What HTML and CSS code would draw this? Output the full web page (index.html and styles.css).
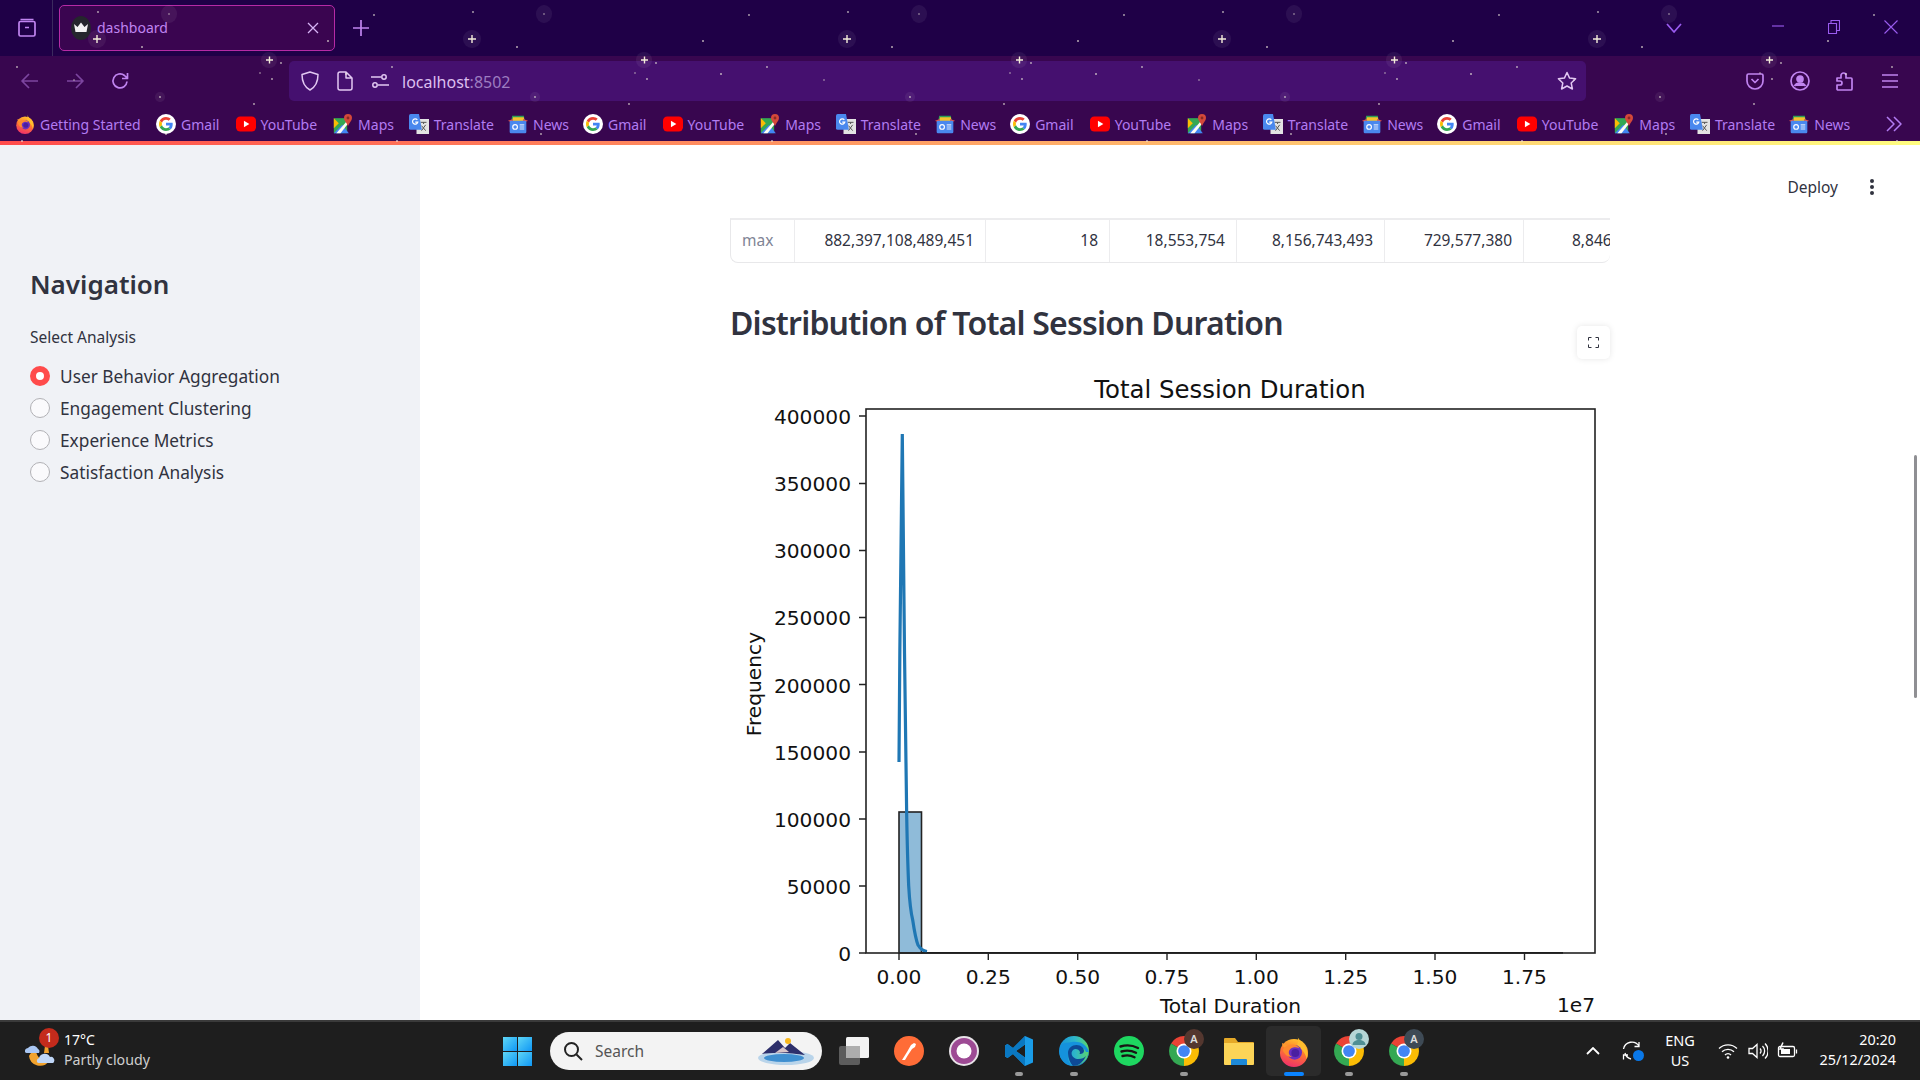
FILE: index.html
```html
<!DOCTYPE html>
<html lang="en">
<head>
    <meta charset="UTF-8">
    <meta name="viewport" content="width=device-width, initial-scale=1.0">
    <title>dashboard</title>
    <link rel="stylesheet" href="styles.css">
</head>
<body>
    <!-- shared icons -->
    <svg class="defs" width="0" height="0" aria-hidden="true">
        <defs>
            <linearGradient id="winGrad" x1="0" y1="0" x2="1" y2="1"><stop offset="0" stop-color="#5fd6f5"/><stop offset="1" stop-color="#0f97f5"/></linearGradient>
            <linearGradient id="edgeGrad" x1="0" y1="0" x2="1" y2="0"><stop offset="0" stop-color="#1592dc"/><stop offset=".55" stop-color="#2fb8c8"/><stop offset="1" stop-color="#5bd66a"/></linearGradient>
            <linearGradient id="foxGrad" x1=".7" y1="0" x2=".4" y2="1"><stop offset="0" stop-color="#ffc42e"/><stop offset=".45" stop-color="#ff7a2e"/><stop offset="1" stop-color="#f0306a"/></linearGradient>
            <symbol id="i-firefox" viewBox="0 0 24 24">
                <circle cx="12" cy="13.500" r="10.500" fill="url(#foxGrad)"/>
                <path d="M14.500 .5c.5 3 3.500 4 6 7.500 2.500 4 2 8 1 10-1-5-4-8-8-9.500 2-2.500 2-5.500 1-8z" fill="#ffbd2e"/>
                <path d="M3 6c0 2 1 3 2 3.500L8 8z" fill="#ff9a2e"/>
                <circle cx="12.500" cy="13" r="5.500" fill="#6a2fc0"/>
                <circle cx="13" cy="13.500" r="3" fill="#4a1fa0"/>
                <path d="M3.500 11c2-3 6-4.500 9.500-3.500 1.500.5 2.500 1.500 3 2.500-3-1.500-6-1-7.500 1.500-1 2 0 4 2 5-3 0-6-2-7-5.500z" fill="#ff8a2e"/>
            </symbol>
            <symbol id="i-google" viewBox="0 0 24 24">
                <circle cx="12" cy="12" r="12" fill="#fff"/>
                <g transform="translate(3.600 3.600) scale(.35)">
                    <path fill="#EA4335" d="M24 9.500c3.540 0 6.710 1.220 9.210 3.600l6.850-6.850C35.900 2.380 30.470 0 24 0 14.620 0 6.510 5.380 2.560 13.220l7.980 6.190C12.430 13.720 17.740 9.500 24 9.500z"/>
                    <path fill="#4285F4" d="M46.980 24.550c0-1.570-.15-3.090-.38-4.550H24v9.020h12.940c-.58 2.960-2.260 5.480-4.780 7.180l7.730 6c4.510-4.180 7.090-10.360 7.090-17.650z"/>
                    <path fill="#FBBC05" d="M10.530 28.590c-.48-1.450-.76-2.990-.76-4.590s.27-3.140.76-4.590l-7.980-6.190C.92 16.460 0 20.120 0 24c0 3.880.92 7.540 2.560 10.780l7.970-6.190z"/>
                    <path fill="#34A853" d="M24 48c6.480 0 11.930-2.130 15.890-5.810l-7.730-6c-2.150 1.450-4.920 2.300-8.160 2.300-6.260 0-11.570-4.220-13.470-9.910l-7.980 6.190C6.510 42.620 14.620 48 24 48z"/>
                </g>
            </symbol>
            <symbol id="i-youtube" viewBox="0 0 24 24">
                <rect x="0" y="3" width="24" height="18" rx="5" fill="#f00"/>
                <path d="M9.500 8l6.500 4-6.500 4z" fill="#fff"/>
            </symbol>
            <symbol id="i-maps" viewBox="0 0 24 24">
                <path d="M1 5h16v18H1z" fill="#34a853"/>
                <path d="M1 23l10-10 8 10z" fill="#4285f4"/>
                <path d="M1 5l6 6-6 6z" fill="#fbbc05"/>
                <path d="M4 23L17 8v5l-8 10z" fill="#fdfdf5"/>
                <path d="M18 0a4.800 4.800 0 0 1 4.800 4.800c0 3.200-3.300 5.700-4.800 9.700-1.500-4-4.800-6.500-4.800-9.700A4.800 4.800 0 0 1 18 0z" fill="#d4493a"/>
                <circle cx="18" cy="4.800" r="1.700" fill="#8c2a22"/>
            </symbol>
            <symbol id="i-translate" viewBox="0 0 24 24">
                <path d="M9 6h15v18H9z" fill="#e3e3e3"/>
                <path d="M14 10h7M17.500 10v2M15 20l5-7M15 14l5 6" stroke="#555" stroke-width="1.200" fill="none"/>
                <path d="M0 2a2 2 0 0 1 2-2h10l3.500 19H2a2 2 0 0 1-2-2z" fill="#4a88ee"/>
                <path d="M10 7a3.200 3.200 0 1 0 .6 2.700H7.500" stroke="#fff" stroke-width="1.400" fill="none"/>
            </symbol>
            <symbol id="i-news" viewBox="0 0 24 24">
                <path d="M5 2h14l1 6H4z" fill="#2f9e57"/>
                <path d="M6 4h13l1 6H5z" fill="#f6c02d"/>
                <path d="M0 8l6-2v5z" fill="#e2574a"/>
                <path d="M24 8l-6-2v5z" fill="#e2574a"/>
                <rect x="2" y="8" width="20" height="15" rx="1.500" fill="#4a88ee"/>
                <circle cx="8.500" cy="15.500" r="2.800" fill="none" stroke="#fff" stroke-width="1.400"/>
                <path d="M14 13h5.500M14 15.500h5.500M14 18h5.500" stroke="#dce8fb" stroke-width="1.300"/>
            </symbol>
            <symbol id="i-chrome" viewBox="0 0 24 24">
                <path d="M12 12L22.390 6A12 12 0 0 0 1.610 6z" fill="#ea4335"/>
                <path d="M12 12L1.610 6A12 12 0 0 0 12 24z" fill="#34a853"/>
                <path d="M12 12L12 24A12 12 0 0 0 22.390 6z" fill="#fbbc05"/>
                <circle cx="12" cy="12" r="6" fill="#fff"/>
                <circle cx="12" cy="12" r="4.700" fill="#4285f4"/>
            </symbol>
        </defs>
    </svg>

    <div class="browser">
        <div class="tabstrip">
            <div class="tab-manager">
                <svg class="ic" viewBox="0 0 20 20" width="20" height="20"><path d="M3.500 1.500h13M2 5a1.500 1.500 0 0 1 1.500-1.500h13A1.500 1.500 0 0 1 18 5v11.500a1.500 1.500 0 0 1-1.500 1.500h-13A1.500 1.500 0 0 1 2 16.500zM8 9.500h4"/></svg>
            </div>
            <div class="tab">
                <svg class="favicon" viewBox="0 0 20 24" width="20" height="24"><ellipse cx="10" cy="12" rx="10" ry="12" fill="#25262d"/><path d="M3 8l3.500 3L10 6.500 13.500 11 17 8l-1.500 8h-11z" fill="#f3f3f3"/></svg>
                <span class="tab-title">dashboard</span>
                <svg class="ic tab-close" viewBox="0 0 12 12" width="12" height="12"><path d="M1 1l10 10M11 1L1 11"/></svg>
            </div>
            <div class="tab-new">
                <svg class="ic" viewBox="0 0 16 16" width="16" height="16"><path d="M8 0v16M0 8h16"/></svg>
            </div>
            <div class="win-controls">
                <svg class="ic ic-win win-list" viewBox="0 0 16 10" width="16" height="10"><path d="M1 1l7 8 7-8"/></svg>
                <svg class="ic ic-win win-min" viewBox="0 0 12 2" width="12" height="2"><path d="M0 1h12"/></svg>
                <svg class="ic ic-win win-max" viewBox="0 0 12 14" width="12" height="14"><path d="M.5 3.500h8v10h-8zM3 3.500v-3h8.500v10h-3"/></svg>
                <svg class="ic ic-win win-close" viewBox="0 0 14 14" width="14" height="14"><path d="M.5.500l13 13M13.500.500l-13 13"/></svg>
            </div>
        </div>

        <div class="toolbar">
            <div class="tool dim"><svg class="ic" viewBox="0 0 18 16" width="18" height="16"><path d="M17 8H1M8 1L1 8l7 7"/></svg></div>
            <div class="tool dim"><svg class="ic" viewBox="0 0 18 16" width="18" height="16"><path d="M1 8h16M10 1l7 7-7 7"/></svg></div>
            <div class="tool"><svg class="ic" viewBox="0 0 18 18" width="18" height="18"><path d="M16 9.500A7 7 0 1 1 13.500 3.500L16 6M16.500 1v5.500H11"/></svg></div>
            <div class="urlbar">
                <div class="url-icon"><svg class="ic ic-pale" viewBox="0 0 18 20" width="18" height="20"><path d="M9 1l8 2.500c0 8-2.500 12.500-8 15.500C3.500 16 1 11.500 1 3.500z"/></svg></div>
                <div class="url-icon"><svg class="ic ic-pale" viewBox="0 0 16 20" width="16" height="20"><path d="M1 3a2 2 0 0 1 2-2h6l6 6v10a2 2 0 0 1-2 2H3a2 2 0 0 1-2-2zM9 1v6h6"/></svg></div>
                <div class="url-icon"><svg class="ic ic-pale" viewBox="0 0 18 14" width="18" height="14"><circle cx="13" cy="3" r="2.200"/><circle cx="4" cy="11" r="2.200"/><path d="M0 3h10M7 11h11"/></svg></div>
                <div class="url-text">localhost<span class="url-port">:8502</span></div>
                <div class="url-star"><svg class="ic ic-pale" viewBox="0 0 20 20" width="20" height="20"><path d="M10 1.500l2.600 5.600 6 .7-4.400 4.200 1.200 6L10 15l-5.400 3 1.200-6L1.400 7.800l6-.7z"/></svg></div>
            </div>
            <div class="tool-right">
                <div class="tool"><svg class="ic" viewBox="0 0 18 18" width="18" height="18"><path d="M1 3.500A1.500 1.500 0 0 1 2.500 2h13A1.500 1.500 0 0 1 17 3.500V9A8 8 0 0 1 1 9zM5.500 7L9 10.500 12.500 7"/></svg></div>
                <div class="tool"><svg class="ic" viewBox="0 0 20 20" width="20" height="20"><circle cx="10" cy="10" r="9"/><circle cx="10" cy="8" r="3" fill="currentColor"/><path d="M4.500 15c1-2 3-3 5.500-3s4.500 1 5.500 3" fill="currentColor"/></svg></div>
                <div class="tool"><svg class="ic" viewBox="0 0 18 20" width="18" height="20"><path d="M1 7h4V4.500a2.500 2.500 0 0 1 5 0V7h5a1 1 0 0 1 1 1v10a1 1 0 0 1-1 1H2a1 1 0 0 1-1-1v-4h3a2 2 0 0 0 0-4H1z"/></svg></div>
                <div class="tool"><svg class="ic" viewBox="0 0 16 14" width="16" height="14"><path d="M0 1h16M0 7h16M0 13h16"/></svg></div>
            </div>
        </div>

        <div class="bookmarks">
            <a class="bm bm-start"><svg class="bm-ic" width="20" height="20"><use href="#i-firefox"/></svg>Getting Started</a>
            <a class="bm bm-gmail"><svg class="bm-ic" width="20" height="20"><use href="#i-google"/></svg>Gmail</a>
            <a class="bm bm-yt"><svg class="bm-ic" width="20" height="20"><use href="#i-youtube"/></svg>YouTube</a>
            <a class="bm bm-maps"><svg class="bm-ic" width="20" height="20"><use href="#i-maps"/></svg>Maps</a>
            <a class="bm bm-tr"><svg class="bm-ic" width="20" height="20"><use href="#i-translate"/></svg>Translate</a>
            <a class="bm bm-news"><svg class="bm-ic" width="20" height="20"><use href="#i-news"/></svg>News</a>
            <a class="bm bm-gmail"><svg class="bm-ic" width="20" height="20"><use href="#i-google"/></svg>Gmail</a>
            <a class="bm bm-yt"><svg class="bm-ic" width="20" height="20"><use href="#i-youtube"/></svg>YouTube</a>
            <a class="bm bm-maps"><svg class="bm-ic" width="20" height="20"><use href="#i-maps"/></svg>Maps</a>
            <a class="bm bm-tr"><svg class="bm-ic" width="20" height="20"><use href="#i-translate"/></svg>Translate</a>
            <a class="bm bm-news"><svg class="bm-ic" width="20" height="20"><use href="#i-news"/></svg>News</a>
            <a class="bm bm-gmail"><svg class="bm-ic" width="20" height="20"><use href="#i-google"/></svg>Gmail</a>
            <a class="bm bm-yt"><svg class="bm-ic" width="20" height="20"><use href="#i-youtube"/></svg>YouTube</a>
            <a class="bm bm-maps"><svg class="bm-ic" width="20" height="20"><use href="#i-maps"/></svg>Maps</a>
            <a class="bm bm-tr"><svg class="bm-ic" width="20" height="20"><use href="#i-translate"/></svg>Translate</a>
            <a class="bm bm-news"><svg class="bm-ic" width="20" height="20"><use href="#i-news"/></svg>News</a>
            <a class="bm bm-gmail"><svg class="bm-ic" width="20" height="20"><use href="#i-google"/></svg>Gmail</a>
            <a class="bm bm-yt"><svg class="bm-ic" width="20" height="20"><use href="#i-youtube"/></svg>YouTube</a>
            <a class="bm bm-maps"><svg class="bm-ic" width="20" height="20"><use href="#i-maps"/></svg>Maps</a>
            <a class="bm bm-tr"><svg class="bm-ic" width="20" height="20"><use href="#i-translate"/></svg>Translate</a>
            <a class="bm bm-news"><svg class="bm-ic" width="20" height="20"><use href="#i-news"/></svg>News</a>
            <svg class="ic bm-more" viewBox="0 0 16 16" width="16" height="16"><path d="M1 1l7 7-7 7M8 1l7 7-7 7"/></svg>
        </div>

        <!-- firefox theme stars, repeats every 375px -->
        <svg class="stars" width="1920" height="145" aria-hidden="true">
            <defs>
                <pattern id="starTile" width="375" height="145" patternUnits="userSpaceOnUse">
                    <g fill="#fff" fill-opacity=".06">
                        <circle cx="97" cy="39" r="9"/>
                        <ellipse cx="169" cy="14" rx="8" ry="9"/>
                        <circle cx="269" cy="60" r="8"/>
                        <circle cx="160" cy="97" r="5"/>
                    </g>
                    <path d="M93 39h8M97 35v8M266 60h7M269.500 56.500v7" stroke="#f3ecd9" stroke-width="1.400" fill="none"/>
                    <g fill="#e9e2d8" fill-opacity=".75">
                        <circle cx="98" cy="12" r=".9"/>
                        <circle cx="169" cy="14" r=".8"/>
                        <circle cx="374" cy="15" r=".9"/>
                        <circle cx="142" cy="47" r="1"/>
                        <circle cx="328" cy="41" r="1"/>
                        <circle cx="281" cy="63" r=".9"/>
                        <circle cx="17" cy="67" r=".9"/>
                        <circle cx="260" cy="73" r=".8"/>
                        <circle cx="346" cy="74" r="1"/>
                        <circle cx="272" cy="79" r=".9"/>
                        <circle cx="74" cy="80" r=".8"/>
                        <circle cx="160" cy="97" r=".9"/>
                        <circle cx="254" cy="104" r=".9"/>
                        <circle cx="166" cy="134" r=".9"/>
                        <circle cx="22" cy="141" r="1"/>
                    </g>
                </pattern>
            </defs>
            <rect width="1920" height="145" fill="url(#starTile)"/>
        </svg>
    </div>
    <div class="decoration"></div>

    <div class="app">
        <aside class="sidebar">
            <h2 class="nav-title">Navigation</h2>
            <p class="radio-label">Select Analysis</p>
            <div class="radio-row"><span class="radio radio-on"></span>User Behavior Aggregation</div>
            <div class="radio-row"><span class="radio"></span>Engagement Clustering</div>
            <div class="radio-row"><span class="radio"></span>Experience Metrics</div>
            <div class="radio-row"><span class="radio"></span>Satisfaction Analysis</div>
        </aside>
        <main class="main">
            <div class="app-header">
                <span class="deploy">Deploy</span>
                <svg class="kebab" viewBox="0 0 4 16" width="4" height="16"><circle cx="2" cy="2" r="2"/><circle cx="2" cy="8" r="2"/><circle cx="2" cy="14" r="2"/></svg>
            </div>
            <div class="block">
                <div class="df">
                    <div class="df-cell df-index">max</div>
                    <div class="df-cell df-c1">882,397,108,489,451</div>
                    <div class="df-cell df-c2">18</div>
                    <div class="df-cell df-c3">18,553,754</div>
                    <div class="df-cell df-c4">8,156,743,493</div>
                    <div class="df-cell df-c5">729,577,380</div>
                    <div class="df-cell df-c6">8,846,</div>
                </div>
                <h2 class="section-title">Distribution of Total Session Duration</h2>
                <div class="chart-wrap">
                    <div class="fullscreen">
                        <svg viewBox="0 0 11 11" width="11" height="11"><path d="M.5 3.500v-3h3M7.500.500h3v3M10.500 7.500v3h-3M3.500 10.500h-3v-3"/></svg>
                    </div>
                    <svg class="chart" viewBox="730 360 880 660" width="880" height="660">
                        <text class="c-title" x="1230" y="398" text-anchor="middle">Total Session Duration</text>

                        <rect x="899" y="812" width="22.500" height="141" fill="#8fbbd9" stroke="#222" stroke-width="1.600"/>
                        <path d="M921.500 952.800H1563" stroke="#111" stroke-width="1.800" fill="none"/>
                        <path d="M899 762C899.800 650 901 500 902.300 434C903.500 520 904.500 700 906.700 816C907.500 860 908 870 908.700 886C909.800 905 911 913 912.700 920C914.500 932 916 940 918 945C921 950 924 951 927 951.500" stroke="#1f77b4" stroke-width="3.200" fill="none"/>

                        <rect x="866" y="409" width="729" height="544" fill="none" stroke="#222" stroke-width="1.600"/>

                        <g stroke="#222" stroke-width="1.400">
                            <path d="M859 953h7M859 886h7M859 819h7M859 752h7M859 684.500h7M859 617.500h7M859 550.500h7M859 483.500h7M859 416h7"/>
                            <path d="M899 953v7M988.300 953v7M1077.700 953v7M1167 953v7M1256.300 953v7M1345.700 953v7M1435 953v7M1524.500 953v7"/>
                        </g>
                        <g class="c-tick" text-anchor="end">
                            <text x="851" y="961">0</text>
                            <text x="851" y="894">50000</text>
                            <text x="851" y="827">100000</text>
                            <text x="851" y="760">150000</text>
                            <text x="851" y="693">200000</text>
                            <text x="851" y="625">250000</text>
                            <text x="851" y="558">300000</text>
                            <text x="851" y="491">350000</text>
                            <text x="851" y="424">400000</text>
                        </g>
                        <g class="c-tick" text-anchor="middle">
                            <text x="899" y="984">0.00</text>
                            <text x="988.300" y="984">0.25</text>
                            <text x="1077.700" y="984">0.50</text>
                            <text x="1167" y="984">0.75</text>
                            <text x="1256.300" y="984">1.00</text>
                            <text x="1345.700" y="984">1.25</text>
                            <text x="1435" y="984">1.50</text>
                            <text x="1524.500" y="984">1.75</text>
                        </g>
                        <text class="c-tick" x="1230.500" y="1012.500" text-anchor="middle">Total Duration</text>
                        <text class="c-tick" x="1595" y="1011.500" text-anchor="end">1e7</text>
                        <text class="c-tick" x="761" y="684" text-anchor="middle" transform="rotate(-90 761 684)">Frequency</text>
                    </svg>
                </div>
            </div>
            <div class="scroll-thumb"></div>
        </main>
    </div>

    <footer class="taskbar">
        <div class="weather">
            <div class="weather-ic">
                <svg viewBox="0 0 32 30" width="32" height="30">
                    <path d="M5 18a11 11 0 0 0 20 5c-6 1-12-3-13-10-3 0-6 2-7 5z" fill="#f2a32e"/>
                    <path d="M21 8h3l1 7h-5z" fill="#f2a32e"/>
                    <path d="M1 14a3.500 3.500 0 0 1 3-4 6 6 0 0 1 10 1 3 3 0 0 1 1 4H3a2 2 0 0 1-2-1z" fill="#a9c6f2"/>
                    <path d="M13 24a3.500 3.500 0 0 1 2-4 6 6 0 0 1 11-1 3.500 3.500 0 0 1 4 5 2 2 0 0 1-1 1H15a2 2 0 0 1-2-1z" fill="#bfd6f7"/>
                </svg>
                <span class="weather-badge">1</span>
            </div>
            <div class="weather-text">
                <div class="temp">17°C</div>
                <div class="cond">Partly cloudy</div>
            </div>
        </div>
        <svg class="win-logo" viewBox="0 0 29 29" width="29" height="29">
            <rect width="14" height="14" fill="url(#winGrad)"/>
            <rect x="15" width="14" height="14" fill="url(#winGrad)"/>
            <rect y="15" width="14" height="14" fill="url(#winGrad)"/>
            <rect x="15" y="15" width="14" height="14" fill="url(#winGrad)"/>
        </svg>
        <div class="search">
            <svg class="search-ic" viewBox="0 0 20 20" width="20" height="20"><circle cx="8.500" cy="8.500" r="6.500"/><path d="M13.500 13.500L19 19"/></svg>
            <span class="search-text">Search</span>
            <svg class="search-art" viewBox="0 0 58 28" width="58" height="28">
                <ellipse cx="29" cy="21" rx="28" ry="7" fill="#b9d4ea"/>
                <ellipse cx="27" cy="21" rx="20" ry="4" fill="#3f8fd0"/>
                <path d="M5 17L21 3l7 8 5-5 15 12c-10-2-33-3-43-1z" fill="#2d2f6b"/>
                <path d="M18 16l8-6 6 5z" fill="#d8c5c8"/>
                <circle cx="31" cy="4" r="3" fill="#f8b71c"/>
            </svg>
        </div>
        <div class="apps">
            <div class="app-ic">
                <svg viewBox="0 0 30 28" width="30" height="28">
                    <rect x="0" y="9" width="21" height="19" rx="2" fill="#5c5c5c"/>
                    <rect x="7" y="0" width="23" height="21" rx="1.500" fill="#f2f2f2"/>
                    <rect x="7" y="9" width="14" height="12" fill="#adadad"/>
                </svg>
            </div>
            <div class="app-ic">
                <svg viewBox="0 0 30 30" width="30" height="30">
                    <circle cx="15" cy="15" r="15" fill="#ff6c37"/>
                    <path d="M8 24l5-8 4-7 3-2 2 1-1 3-3 2-4 6-3 5z" fill="#fff"/>
                </svg>
            </div>
            <div class="app-ic">
                <svg viewBox="0 0 30 30" width="30" height="30">
                    <circle cx="15" cy="15" r="15" fill="#e8e3e8"/>
                    <circle cx="15" cy="15" r="13" fill="#9d4a94"/>
                    <circle cx="15" cy="15" r="7.500" fill="#fff"/>
                </svg>
            </div>
            <div class="app-ic running">
                <svg viewBox="0 0 30 30" width="30" height="30">
                    <path d="M21 0L9 12 3.500 8 1 9.500v11L3.500 22 9 18l12 12 8-3.500V3.500zM21 8.500v13L12 15z" fill="#1a9ce8" fill-rule="evenodd"/>
                    <path d="M21 0v8.500L12 15l9 6.500V30L9 18l-5.500 4L1 20.500v-11L3.500 8 9 12z" fill="#0a78c2"/>
                </svg>
            </div>
            <div class="app-ic running">
                <svg viewBox="0 0 30 30" width="30" height="30">
                    <circle cx="15" cy="15" r="15" fill="url(#edgeGrad)"/>
                    <path d="M3 8C1 11 0 16 1 20c2 6 7 10 13 10-3-2-6-6-5-11 1-5 5-8 10-8 4 0 7 2 8 5h3C28 8 20 5 13 6 9 6.500 5 7 3 8z" fill="#1592dc"/>
                    <path d="M9 17c0-5 4-8 8.500-8C22 9 25 12 25 15c0 2-2 3-4 3-1 0 0-1 0-2-1-3-5-4-7-2-3 3-1 8 4 9 4 .5 7-1 9-3-2 5-7 10-13 10-3-3-5-8-5-13z" fill="#0e4a96"/>
                    <path d="M30 15c0 8-6 15-13 15 4-1 9-4 11-8z" fill="#1f7fd0"/>
                </svg>
            </div>
            <div class="app-ic">
                <svg viewBox="0 0 30 30" width="30" height="30">
                    <circle cx="15" cy="15" r="15" fill="#1ed760"/>
                    <path d="M6.500 10.500c6-1.800 12-1.300 17.500 1.500M7.500 15.500c5-1.400 10-1 14.500 1.300M8.500 20c4-1 8.500-.7 12 1.200" stroke="#191414" stroke-width="2.400" stroke-linecap="round" fill="none"/>
                </svg>
            </div>
            <div class="app-ic running">
                <svg width="30" height="30"><use href="#i-chrome"/></svg>
                <span class="app-badge badge-brown">A</span>
            </div>
            <div class="app-ic">
                <svg viewBox="0 0 30 30" width="30" height="30">
                    <path d="M0 3a1 1 0 0 1 1-1h10l3 4h15a1 1 0 0 1 1 1v6H0z" fill="#e5a928"/>
                    <path d="M0 7h30v21a1 1 0 0 1-1 1H1a1 1 0 0 1-1-1z" fill="#fcd457"/>
                    <path d="M8 23h14a1 1 0 0 1 1 1v5H7v-5a1 1 0 0 1 1-1z" fill="#1d89d8"/>
                </svg>
            </div>
            <div class="app-ic active">
                <svg width="32" height="32"><use href="#i-firefox"/></svg>
            </div>
            <div class="app-ic running">
                <svg width="30" height="30"><use href="#i-chrome"/></svg>
                <span class="app-badge badge-teal">
                    <svg viewBox="0 0 20 20" width="20" height="20"><circle cx="10" cy="7.500" r="3.500" fill="#4f8f94"/><path d="M3.500 16c0-3.500 3-5 6.500-5s6.500 1.500 6.500 5z" fill="#4f8f94"/></svg>
                </span>
            </div>
            <div class="app-ic running">
                <svg width="30" height="30"><use href="#i-chrome"/></svg>
                <span class="app-badge badge-slate">A</span>
            </div>
        </div>
        <div class="tray">
            <div class="tray-item tray-chev"><svg class="tray-ic" viewBox="0 0 14 8" width="14" height="8"><path d="M1 7l6-6 6 6"/></svg></div>
            <div class="tray-item tray-sync">
                <svg class="tray-ic" viewBox="0 0 20 20" width="20" height="20"><path d="M1.500 8A8.500 8.500 0 0 1 17 5M17 1v4.500h-4.500M3 12a8.500 8.500 0 0 0 6 6M1.500 18.500V14H6"/></svg>
                <span class="sync-dot"></span>
            </div>
            <div class="tray-item tray-lang"><span>ENG</span><span>US</span></div>
            <div class="tray-item tray-wifi"><svg class="tray-ic" viewBox="0 0 20 16" width="20" height="16"><path d="M1 5.500a13 13 0 0 1 18 0M4 8.800a8.500 8.500 0 0 1 12 0M7 12a4 4 0 0 1 6 0"/><circle cx="10" cy="14.500" r="1.300" fill="#fff" stroke="none"/></svg></div>
            <div class="tray-item tray-vol"><svg class="tray-ic" viewBox="0 0 20 18" width="20" height="18"><path d="M1 6.500h3.500L9 2.500v13l-4.500-4H1zM12 6.500a3.500 3.500 0 0 1 0 5M14.500 4a7 7 0 0 1 0 10M17 1.500a10.500 10.500 0 0 1 0 15"/></svg></div>
            <div class="tray-item tray-batt"><svg class="tray-ic" viewBox="0 0 22 18" width="22" height="18"><path d="M4 4.500h13a1.500 1.500 0 0 1 1.500 1.500v7a1.500 1.500 0 0 1-1.500 1.500H4A1.500 1.500 0 0 1 2.500 13V6A1.500 1.500 0 0 1 4 4.500zM20.500 7.500v4"/><path d="M5 7h9v5H5z" fill="#fff" stroke="none"/><path d="M7 .5L4 7h3l-1 4" stroke-width="1.500"/></svg></div>
            <div class="clock"><div>20:20</div><div>25/12/2024</div></div>
        </div>
    </footer>
</body>
</html>
```

FILE: styles.css
```css
body{
    margin: 0;
    width: 1920px;
    height: 1080px;
    display: flex;
    flex-direction: column;
    overflow: hidden;
    font-family: "Noto Sans", "Open Sans", Arial, sans-serif;
    background: white;
}

.defs{
    position: absolute;
}

/* ---------- browser chrome ---------- */
.browser{
    position: relative;
    height: 141px;
    background: #38064f;
    color: #c084f0;
}

.stars{
    position: absolute;
    top: 0;
    left: 0;
    pointer-events: none;
}

.ic{
    fill: none;
    stroke: currentColor;
    stroke-width: 1.7;
    stroke-linejoin: round;
    flex: none;
}

.tabstrip{
    height: 56px;
    display: flex;
    background: #1f0047;
}

.tab-manager{
    width: 53px;
    border-right: 1px solid #3b2a5e;
    display: flex;
    align-items: center;
    justify-content: center;
    padding-left: 2px;
    box-sizing: border-box;
}

.tab{
    width: 276px;
    height: 46px;
    box-sizing: border-box;
    margin: 5px 0 0 6px;
    display: flex;
    align-items: center;
    padding: 0 15px 1px 11px;
    background: #3a0550;
    border: 1.5px solid #b62aa6;
    border-radius: 5px;
}

.tab-title{
    font-size: 14px;
    margin-left: 6px;
    flex: 1;
}

.tab-close{
    stroke-width: 1.3;
    color: #d7b4f5;
}

.tab-new{
    width: 52px;
    display: flex;
    align-items: center;
    justify-content: center;
}

.win-controls{
    margin-left: auto;
    display: flex;
    align-items: center;
    padding-right: 22px;
    color: #9b5cf0;
}

.ic-win{
    stroke-width: 1.1;
}

.win-list{
    stroke-width: 1.7;
    margin-right: 90px;
}

.win-min{
    margin-right: 44px;
    margin-bottom: 5px;
}

.win-max{
    margin-right: 44px;
    margin-bottom: 3px;
}

.win-close{
    margin-bottom: 3px;
}

.toolbar{
    height: 50px;
    display: flex;
    align-items: center;
    padding-left: 7px;
}

.tool{
    width: 45px;
    display: flex;
    align-items: center;
    justify-content: center;
}

.dim{
    opacity: .5;
}

.urlbar{
    width: 1297px;
    height: 40px;
    margin-left: 147px;
    display: flex;
    align-items: center;
    padding: 0 2px 0 3px;
    box-sizing: border-box;
    background: #45106f;
    border-radius: 5px;
    color: #e2c8f2;
}

.url-icon{
    width: 35px;
    display: flex;
    justify-content: center;
}

.ic-pale{
    stroke-width: 1.5;
}

.url-text{
    margin-left: 5px;
    padding-top: 2px;
    font-size: 16px;
    color: #dcbff0;
}

.url-port{
    color: #9d7cc0;
}

.url-star{
    margin-left: auto;
    width: 35px;
    display: flex;
    justify-content: center;
}

.tool-right{
    margin-left: auto;
    display: flex;
    padding-right: 8px;
}

.bookmarks{
    height: 35px;
    display: flex;
    align-items: center;
    padding: 1px 0 0 15px;
    box-sizing: border-box;
    font-size: 14px;
    color: #b27cf2;
    white-space: nowrap;
}

.bm{
    display: flex;
    align-items: center;
    flex: none;
}

.bm-ic{
    margin-right: 5px;
    flex: none;
}

.bm-start{ width: 141px; }
.bm-gmail{ width: 79.5px; }
.bm-yt{ width: 97.6px; }
.bm-maps{ width: 75.6px; }
.bm-tr{ width: 99.4px; }
.bm-news{ width: 75px; }

.bm-more{
    margin-left: auto;
    margin-right: 18px;
    stroke-width: 1.5;
}

.decoration{
    height: 4px;
    background: linear-gradient(90deg, #ff4b4b, #fffd80);
}

/* ---------- streamlit app ---------- */
.app{
    flex: 1;
    display: flex;
    min-height: 0;
    overflow: hidden;
    color: #31333f;
}

.sidebar{
    width: 420px;
    box-sizing: border-box;
    padding: 120px 0 0 30px;
    background: #f0f2f6;
}

.nav-title{
    margin: 0;
    font-size: 26px;
    line-height: 38px;
    font-weight: 600;
}

.radio-label{
    margin: 23px 0 0 0;
    font-size: 15.5px;
    line-height: 22px;
}

.radio-row{
    height: 32px;
    display: flex;
    align-items: center;
    font-size: 17.300px;
    margin-top: 0;
}

.radio-label + .radio-row{
    margin-top: 12px;
}

.radio{
    width: 20px;
    height: 20px;
    box-sizing: border-box;
    margin-right: 10px;
    border: 1px solid #b1b1b5;
    border-radius: 50%;
    background: #fafafc;
}

.radio-on{
    border: 6px solid #ff4b4b;
    background: white;
}

.main{
    position: relative;
    flex: 1;
    padding-left: 310px;
}

.app-header{
    height: 73px;
    width: 1144px;
    display: flex;
    align-items: center;
    justify-content: flex-end;
    padding-top: 11px;
    box-sizing: border-box;
}

.deploy{
    font-size: 15.5px;
    margin-right: 32px;
}

.kebab{
    fill: #31333f;
}

.block{
    width: 880px;
}

.df{
    display: flex;
    height: 45px;
    box-sizing: border-box;
    border-top: 2px solid #ececee;
    border-left: 1px solid #e8e8ea;
    border-bottom: 1.5px solid #e8e8ea;
    border-radius: 0 0 8px 8px;
    font-size: 15.500px;
    overflow: hidden;
}

.df-cell{
    box-sizing: border-box;
    height: 100%;
    line-height: 40px;
    text-align: right;
    padding-right: 11px;
    border-right: 1px solid #ececee;
    white-space: nowrap;
    flex: none;
}

.df-index{ width: 64px; text-align: left; padding-left: 11px; color: #808495; }
.df-c1{ width: 191px; }
.df-c2{ width: 124px; }
.df-c3{ width: 127px; }
.df-c4{ width: 148px; }
.df-c5{ width: 139px; }
.df-c6{ width: 86px; text-align: left; padding-left: 48px; border-right: none; overflow: hidden; padding-right: 0; }

.section-title{
    margin: 40px 0 0 0;
    font-size: 32px;
    line-height: 40px;
    font-weight: 600;
    letter-spacing: -.8px;
    white-space: nowrap;
}

.chart-wrap{
    position: relative;
    margin-top: 17px;
}

.chart{
    display: block;
}

.chart text{
    font-family: "DejaVu Sans", sans-serif;
    fill: #111;
}

.c-title{
    font-size: 24.400px;
}

.c-tick{
    font-size: 20.200px;
}

.fullscreen{
    position: absolute;
    top: -34px;
    right: 0;
    width: 33px;
    height: 33px;
    display: flex;
    align-items: center;
    justify-content: center;
    background: white;
    border-radius: 5px;
    box-shadow: 0 0 6px rgba(0, 0, 0, .1);
}

.fullscreen svg{
    fill: none;
    stroke: #31333f;
    stroke-width: 1;
}

.scroll-thumb{
    position: absolute;
    top: 310px;
    right: 3px;
    width: 3px;
    height: 243px;
    background: #8f8f93;
    border-radius: 2px;
}

/* ---------- windows taskbar ---------- */
.taskbar{
    height: 60px;
    box-sizing: border-box;
    display: flex;
    align-items: center;
    background: #1e1e1e;
    border-top: 2px solid #3a3a3a;
    color: white;
    z-index: 1;
}

.weather{
    width: 503px;
    box-sizing: border-box;
    padding-left: 24px;
    display: flex;
    align-items: center;
}

.weather-ic{
    position: relative;
    width: 40px;
    height: 30px;
    margin-top: 4px;
}

.weather-badge{
    position: absolute;
    top: -10px;
    left: 15px;
    width: 20px;
    height: 20px;
    border-radius: 50%;
    background: #c42b1c;
    font-size: 12px;
    line-height: 20px;
    text-align: center;
}

.weather-text{
    margin-top: -2px;
}

.temp{
    font-size: 14px;
    line-height: 20px;
}

.cond{
    font-size: 14.2px;
    line-height: 20px;
    color: #cfcfcf;
}

.win-logo{
    flex: none;
}

.search{
    width: 272px;
    height: 38px;
    margin-left: 18px;
    box-sizing: border-box;
    padding: 0 7px 0 13px;
    display: flex;
    align-items: center;
    background: #f3f3f3;
    border-radius: 19px;
    flex: none;
}

.search-ic{
    fill: none;
    stroke: #222;
    stroke-width: 2;
}

.search-text{
    margin-left: 12px;
    font-size: 15.500px;
    color: #555;
}

.search-art{
    margin-left: auto;
}

.apps{
    display: flex;
    margin-left: 4px;
}

.app-ic{
    position: relative;
    width: 55px;
    height: 50px;
    display: flex;
    align-items: center;
    justify-content: center;
    flex: none;
}

.app-ic.running::after{
    content: "";
    position: absolute;
    left: 23.500px;
    bottom: 0;
    width: 8px;
    height: 4px;
    border-radius: 2px;
    background: #9a9a9a;
}

.app-ic.active{
    background: #2b2b2b;
    border-radius: 5px;
}

.app-ic.active::after{
    content: "";
    position: absolute;
    left: 17.500px;
    bottom: 0;
    width: 20px;
    height: 4px;
    border-radius: 2px;
    background: #0a84ff;
}

.app-badge{
    position: absolute;
    top: 3px;
    right: 7px;
    width: 20px;
    height: 20px;
    border-radius: 50%;
    font-size: 11px;
    font-weight: 600;
    line-height: 20px;
    text-align: center;
    color: #ddd;
}

.badge-brown{ background: #54372f; }
.badge-teal{ background: #b5d6d6; }
.badge-slate{ background: #3e4a55; }

.tray{
    margin-left: auto;
    display: flex;
    align-items: center;
}

.tray-item{
    position: relative;
    display: flex;
    align-items: center;
    justify-content: center;
}

.tray-ic{
    fill: none;
    stroke: white;
    stroke-width: 1.3;
}

.tray-chev{ width: 40px; }
.tray-chev .tray-ic{ stroke-width: 1.8; }
.tray-sync{ width: 38px; }
.tray-wifi{ width: 38px; }
.tray-vol{ width: 21px; }
.tray-batt{ width: 38px; }

.sync-dot{
    position: absolute;
    left: 20px;
    top: 9px;
    width: 11px;
    height: 11px;
    border-radius: 50%;
    background: #0a78e8;
}

.tray-lang{
    width: 58px;
    flex-direction: column;
    font-size: 14.5px;
    line-height: 20px;
    margin-top: -2px;
}

.clock{
    width: 114px;
    box-sizing: border-box;
    padding-right: 24px;
    margin-top: -2px;
    text-align: right;
    font-size: 14.4px;
    line-height: 20px;
}
```
